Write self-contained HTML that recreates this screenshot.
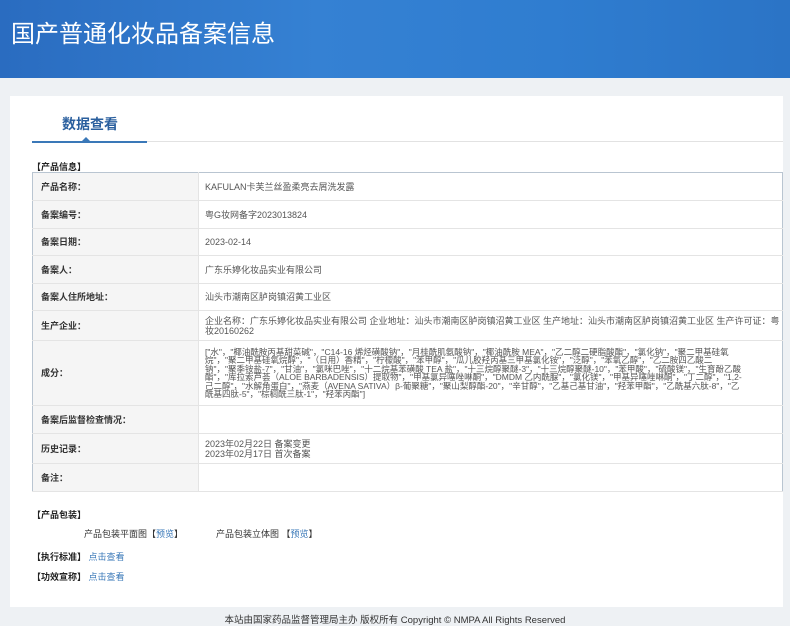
<!DOCTYPE html>
<html><head><meta charset="utf-8"><style>
body{margin:0;width:790px;height:626px;background:#eef1f4;font-family:"Liberation Sans","Noto Sans CJK SC",sans-serif;overflow:hidden;position:relative;color:#333}
.hd{position:absolute;left:0;top:0;width:790px;height:78px;background:linear-gradient(90deg,#2a6cc0 0%,#3581d3 40%,#2f7dd0 70%,#2b74c6 100%)}
.hd h1{margin:0;position:absolute;left:11px;top:14px;font-size:24px;font-weight:normal;color:#fff;letter-spacing:0px}
.panel{position:absolute;left:10px;top:96px;width:773px;height:511px;background:#fff}
.tab{position:absolute;left:62px;top:114px;font-size:14px;font-weight:bold;color:#2a5f9e}
.tl{position:absolute;left:32px;top:141px;width:115px;height:2px;background:#3a78b8}
.tl2{position:absolute;left:147px;top:141px;width:636px;height:1px;background:#e2e2e2}
.tri{position:absolute;left:82px;top:137px;width:0;height:0;border-left:4px solid transparent;border-right:4px solid transparent;border-bottom:4px solid #3a78b8}
.sec{position:absolute;font-size:9px;font-weight:bold;color:#222}
table{position:absolute;left:32px;top:172px;width:751px;border-collapse:collapse;border:1px solid #b9c5d1;font-size:9px}
td{border-bottom:1px solid #e4e4e4;padding:0 0 0 8px;vertical-align:middle;line-height:10px}
td.l{width:157px;background:#f5f5f5;font-weight:bold;color:#333;border-right:1px solid #e4e4e4}
td.v{color:#555;padding-left:6px}
.lk{color:#3a78b8}
.ft{position:absolute;left:0;top:612px;width:790px;text-align:center;font-size:9.5px;color:#333}
</style></head><body>
<div class="hd"><h1>国产普通化妆品备案信息</h1></div>
<div class="panel"></div>
<div class="tab">数据查看</div>
<div class="tl"></div><div class="tl2"></div><div class="tri"></div>
<div class="sec" style="left:32px;top:160px">【产品信息】</div>
<table>
<tr style="height:28px"><td class="l">产品名称：</td><td class="v">KAFULAN卡芙兰丝盈柔亮去屑洗发露</td></tr>
<tr style="height:28px"><td class="l">备案编号：</td><td class="v">粤G妆网备字2023013824</td></tr>
<tr style="height:27px"><td class="l">备案日期：</td><td class="v">2023-02-14</td></tr>
<tr style="height:28px"><td class="l">备案人：</td><td class="v">广东乐婷化妆品实业有限公司</td></tr>
<tr style="height:27px"><td class="l">备案人住所地址：</td><td class="v">汕头市潮南区胪岗镇沼黄工业区</td></tr>
<tr style="height:30px"><td class="l">生产企业：</td><td class="v">企业名称：广东乐婷化妆品实业有限公司 企业地址：汕头市潮南区胪岗镇沼黄工业区 生产地址：汕头市潮南区胪岗镇沼黄工业区 生产许可证：粤妆20160262</td></tr>
<tr style="height:65px"><td class="l">成分：</td><td class="v" style="font-size:8.5px;line-height:8.5px;padding-right:40px">["水"，"椰油酰胺丙基甜菜碱"，"C14-16 烯烃磺酸钠"，"月桂酰肌氨酸钠"，"椰油酰胺 MEA"，"乙二醇二硬脂酸酯"，"氯化钠"，"聚二甲基硅氧烷"，"聚二甲基硅氧烷醇"，"（日用）香精"，"柠檬酸"，"苯甲醇"，"瓜儿胶羟丙基三甲基氯化铵"，"泛醇"，"苯氧乙醇"，"乙二胺四乙酸二钠"，"聚季铵盐-7"，"甘油"，"氯咪巴唑"，"十二烷基苯磺酸 TEA 盐"，"十三烷醇聚醚-3"，"十三烷醇聚醚-10"，"苯甲酸"，"硫酸镁"，"生育酚乙酸酯"，"库拉索芦荟（ALOE BARBADENSIS）提取物"，"甲基氯异噻唑啉酮"，"DMDM 乙内酰脲"，"氯化镁"，"甲基异噻唑啉酮"，"丁二醇"，"1,2-己二醇"，"水解角蛋白"，"燕麦（AVENA SATIVA）β-葡聚糖"，"聚山梨醇酯-20"，"辛甘醇"，"乙基己基甘油"，"羟苯甲酯"，"乙酰基六肽-8"，"乙酰基四肽-5"，"棕榈酰三肽-1"，"羟苯丙酯"]</td></tr>
<tr style="height:28px"><td class="l">备案后监督检查情况：</td><td class="v"></td></tr>
<tr style="height:30px"><td class="l">历史记录：</td><td class="v">2023年02月22日 备案变更<br>2023年02月17日 首次备案</td></tr>
<tr style="height:28px"><td class="l">备注：</td><td class="v"></td></tr>
</table>
<div class="sec" style="left:32px;top:508px">【产品包装】</div>
<div class="sec" style="left:84px;top:527px;font-weight:normal;color:#333">产品包装平面图【<span class="lk">预览</span>】</div>
<div class="sec" style="left:216px;top:527px;font-weight:normal;color:#333">产品包装立体图 【<span class="lk">预览</span>】</div>
<div class="sec" style="left:32px;top:550px">【执行标准】 <span class="lk" style="font-weight:normal">点击查看</span></div>
<div class="sec" style="left:32px;top:570px">【功效宣称】 <span class="lk" style="font-weight:normal">点击查看</span></div>
<div class="ft">本站由国家药品监督管理局主办 版权所有 Copyright © NMPA All Rights Reserved</div>
</body></html>
